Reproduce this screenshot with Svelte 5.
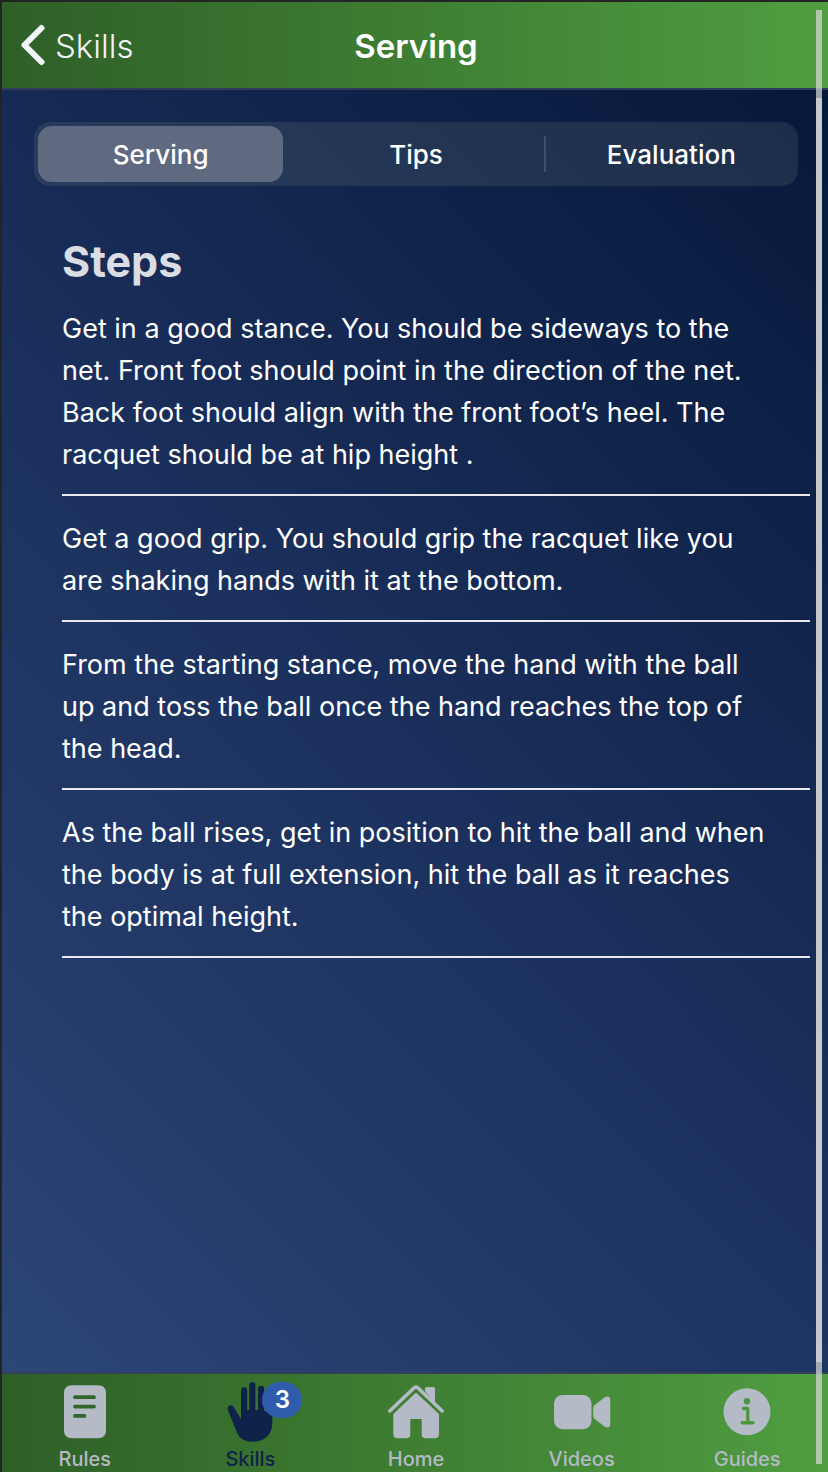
<script>
  const segments = ['Serving', 'Tips', 'Evaluation'];
  let selected = $state('Serving');

  const steps = [
    'Get in a good stance. You should be sideways to the net. Front foot should point in the direction of the net. Back foot should align with the front foot’s heel. The racquet should be at hip height .',
    'Get a good grip. You should grip the racquet like you are shaking hands with it at the bottom.',
    'From the starting stance, move the hand with the ball up and toss the ball once the hand reaches the top of the head.',
    'As the ball rises, get in position to hit the ball and when the body is at full extension, hit the ball as it reaches the optimal height.'
  ];

  const tabs = [
    { name: 'Rules' },
    { name: 'Skills', badge: 3 },
    { name: 'Home' },
    { name: 'Videos' },
    { name: 'Guides' }
  ];
  let current = $state('Skills');
</script>

<div class="app">
  <header class="navbar">
    <button class="back" type="button">
      <svg width="26" height="44" viewBox="0 0 26 44" aria-hidden="true">
        <path d="M21.500 5 4.500 22 21.500 39" fill="none" stroke="currentColor" stroke-width="6" stroke-linecap="round" stroke-linejoin="round" />
      </svg>
      <span>Skills</span>
    </button>
    <h1>Serving</h1>
  </header>

  <main>
    <div class="segmented">
      {#each segments as segment}
        <button type="button" class:selected={selected === segment} aria-pressed={selected === segment} onclick={() => (selected = segment)}>{segment}</button>
      {/each}
    </div>

    <section class="steps">
      <h2>Steps</h2>
      <ul>
        {#each steps as step}
          <li><p>{step}</p></li>
        {/each}
      </ul>
    </section>
    <div class="thumb"></div>
  </main>

  <nav class="tabbar">
    {#each tabs as tab}
      <button type="button" class:active={current === tab.name} onclick={() => (current = tab.name)}>
        <span class="icon">
          <svg width="60" height="64" viewBox="0 0 60 64" fill="currentColor" aria-hidden="true">
            {#if tab.name === 'Rules'}
              <path fill-rule="evenodd" d="M17 7.300h26q8 0 8 8v37q0 8-8 8H17q-8 0-8-8v-37q0-8 8-8Zm3 10a1.900 1.900 0 0 0 0 3.800h19a1.900 1.900 0 0 0 0-3.800Zm0 9.400a1.900 1.900 0 0 0 0 3.800h19a1.900 1.900 0 0 0 0-3.800Zm0 9.300a1.900 1.900 0 0 0 0 3.800h9.500a1.900 1.900 0 0 0 0-3.800Z" />
            {:else if tab.name === 'Skills'}
              <path d="M21 41V12.400a3.100 3.100 0 0 1 6.200 0V32h2V7.100a3.100 3.100 0 0 1 6.200 0V32H38V10.800a3.100 3.100 0 0 1 6.200 0V33h1.900V20a3.100 3.100 0 0 1 6.200 0V45C52.300 57 44 63.700 33.500 63.700C25 63.700 20 61 17.300 55.300L7.900 32C6.400 27.300 12 25.300 14 29.400Z" />
            {:else if tab.name === 'Home'}
              <path d="M30 14.500 53 36V55.800Q53 60.300 48.500 60.300H40Q35.700 60.300 35.700 56.500V41H24.300V56.500Q24.300 60.300 20 60.300H11.800Q7.300 60.300 7.300 55.800V36Z" />
              <path d="M39 17V11.300Q39 9.300 41 9.300H47Q49 9.300 49 11.300V26Z" />
              <path d="M4 32.600 27.900 10Q30 8.200 32.100 10L56 32.600" fill="none" stroke="#3f7f34" stroke-width="8" />
              <path d="M3.800 33 27.900 10Q30 8.200 32.100 10L56.200 33" fill="none" stroke="currentColor" stroke-width="3.600" stroke-linecap="round" />
              <path d="M39 13V11.300Q39 9.300 41 9.300H47Q49 9.300 49 11.300V26Z" />
            {:else if tab.name === 'Videos'}
              <rect x="2" y="17" width="37.500" height="34.300" rx="8.500" />
              <path d="M41.200 30Q41.200 28 43 26.700L52.500 19.500Q58.300 16.500 58.300 22.500V45.500Q58.300 51.500 52.500 48.500L43 41.300Q41.200 40 41.200 38Z" />
            {:else}
              <path fill-rule="evenodd" d="M30 10.300a23.500 23.500 0 1 1 0 47a23.500 23.500 0 1 1 0-47Zm0 9.700a3.200 3.200 0 1 0 0 6.400a3.200 3.200 0 1 0 0-6.400ZM26.500 28.800a1.700 1.700 0 0 0 0 3.400h2.700V43H25.300a1.800 1.800 0 0 0 0 3.600H36a1.800 1.800 0 0 0 0-3.600H32.400V30.800Q32.400 28.800 30.400 28.800Z" />
            {/if}
          </svg>
          {#if tab.badge}<span class="badge">{tab.badge}</span>{/if}
        </span>
        <span class="label">{tab.name}</span>
      </button>
    {/each}
  </nav>
  <div class="thumb outer"></div>
</div>

<style>
  :global(body) {
    margin: 0;
    background: #242427;
    overflow-x: hidden;
  }
  .app {
    position: relative;
    box-sizing: border-box;
    min-height: 100vh;
    display: flex;
    flex-direction: column;
    margin-right: -2px;
    border: solid #242427;
    border-width: 2px 0 0 2px;
    color: #fff;
    font-family: Inter, Roboto, sans-serif;
  }
  button {
    margin: 0;
    padding: 0;
    border: 0;
    background: none;
    color: inherit;
    font: inherit;
    cursor: pointer;
  }
  h1, h2, ul, p {
    margin: 0;
    padding: 0;
  }
  .navbar,
  .tabbar {
    background: linear-gradient(90deg, #2e5f27, #3f7e33 50%, #509e41);
  }
  .navbar {
    display: grid;
    grid-template-columns: 1fr auto 1fr;
    align-items: center;
    height: 86px;
    padding: 0 18px;
    border-bottom: 2px solid #2f3c5c;
  }
  .back {
    display: flex;
    align-items: center;
    justify-self: start;
    gap: 9px;
    color: #f3f4f8;
    font-size: 33px;
    font-weight: 300;
  }
  .back span {
    padding-top: 2px;
  }
  h1 {
    padding-top: 2px;
    font-size: 33px;
    font-weight: 600;
    line-height: 40px;
  }
  main {
    position: relative;
    flex: 1;
    padding: 32px 20px 32px 32px;
    background: linear-gradient(45deg, #2c4678, #1a2f5b 50%, #06183a);
  }
  .segmented {
    display: grid;
    grid-template-columns: repeat(3, 1fr);
    gap: 10px;
    margin-right: 12px;
    padding: 4px;
    border-radius: 16px;
    background: rgba(118, 128, 128, 0.2);
  }
  .segmented button {
    position: relative;
    height: 56px;
    border-radius: 14px;
    font-size: 26px;
    font-weight: 500;
  }
  .segmented button.selected {
    background: #5f697f;
  }
  .segmented button:not(.selected) + button:not(.selected)::before {
    content: '';
    position: absolute;
    left: -5px;
    top: 10px;
    bottom: 10px;
    width: 2px;
    background: rgba(142, 142, 160, 0.3);
  }
  .steps {
    padding: 50px 0 0 28px;
  }
  h2 {
    color: #dadde3;
    font-size: 43px;
    font-weight: 700;
    line-height: 50px;
  }
  ul {
    padding-top: 22px;
    list-style: none;
  }
  li {
    padding-bottom: 18px;
    border-bottom: 2px solid #e7e9ef;
  }
  li + li {
    padding-top: 22px;
  }
  p {
    padding-right: 40px;
    font-size: 27px;
    line-height: 42px;
  }
  .tabbar {
    display: grid;
    grid-template-columns: repeat(5, 1fr);
    height: 98px;
    border-top: 2px solid #34405a;
    color: #b5bac7;
  }
  .tabbar button {
    display: flex;
    flex-direction: column;
    align-items: center;
    gap: 5px;
  }
  .tabbar .active {
    color: #0f2249;
  }
  .icon {
    position: relative;
    display: flex;
    margin-top: 4px;
  }
  .label {
    font-size: 20px;
    font-weight: 500;
    line-height: 24px;
  }
  .badge {
    position: absolute;
    left: 42px;
    top: 4px;
    width: 40px;
    height: 36px;
    border-radius: 18px;
    background: #305cae;
    color: #fff;
    font-size: 24px;
    font-weight: 600;
    line-height: 36px;
    text-align: center;
  }
  .thumb {
    position: absolute;
    top: 8px;
    right: 8px;
    bottom: 10px;
    width: 6px;
    background: rgba(212, 212, 212, 0.73);
    pointer-events: none;
  }
  .thumb.outer {
    bottom: 8px;
  }
</style>
